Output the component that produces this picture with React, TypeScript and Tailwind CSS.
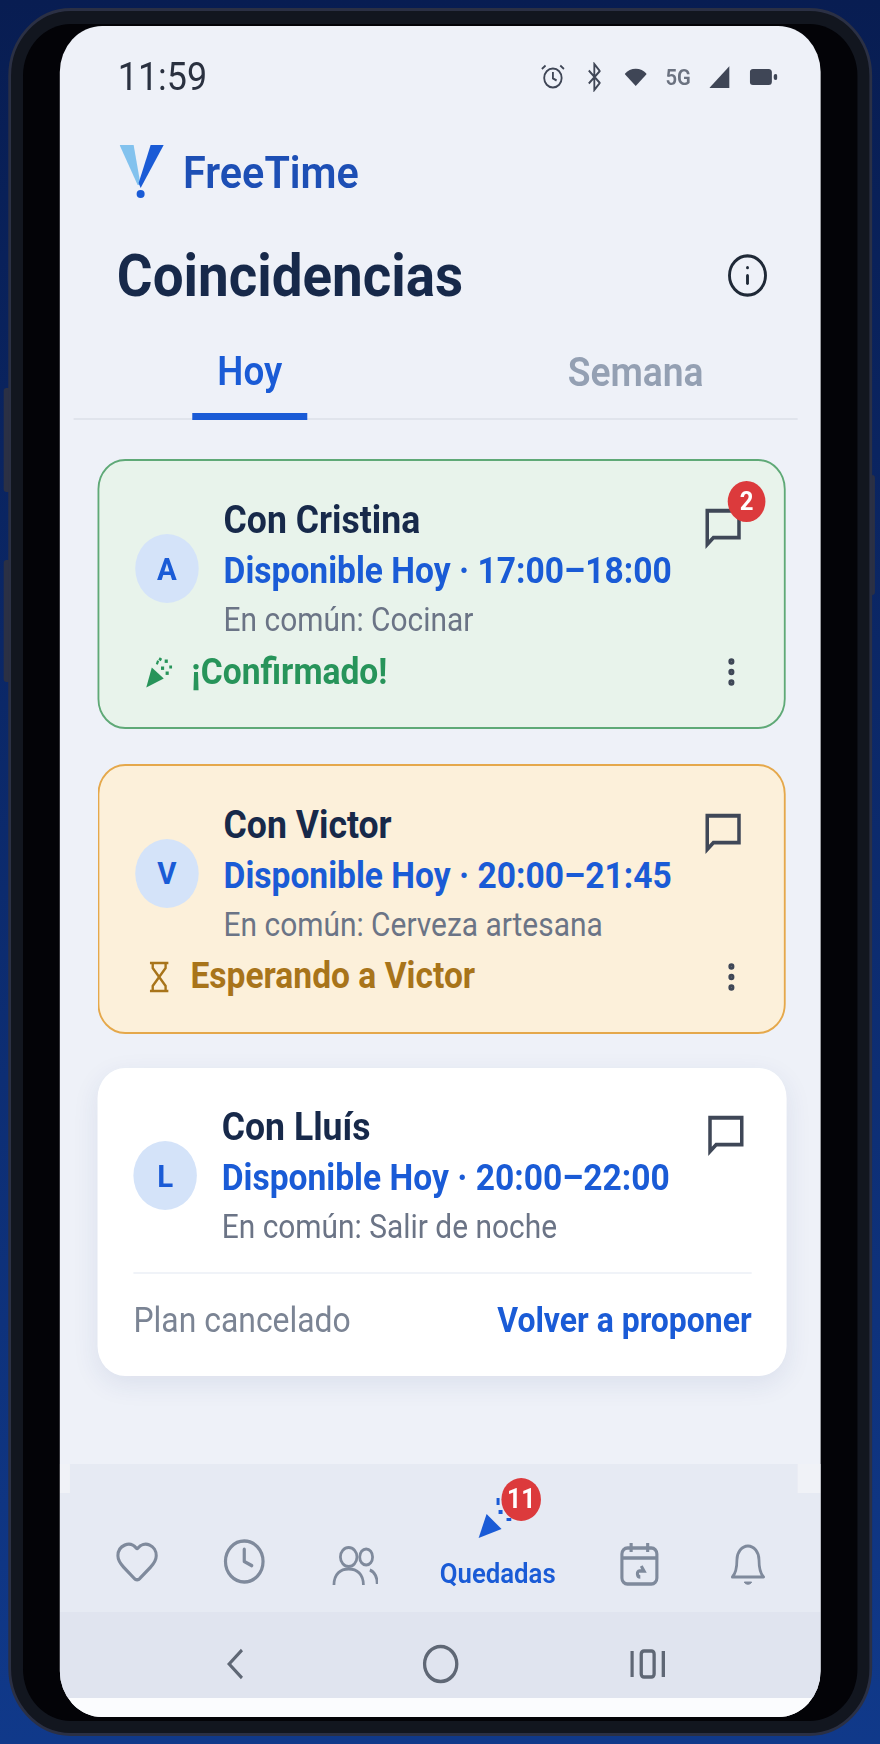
import { Clock, Heart, Info, MoreVertical } from "lucide-react";

const chatPath = "M3 3h18v14H6.5L3 20.5z";

function ChatIcon({ count }: { count?: number }) {
  return (
    <div className="relative mt-[14px] h-[40px] w-[40px] shrink-0 self-start">
      <svg viewBox="0 0 24 24" className="h-[46px] w-[46px] -translate-x-[3px] -translate-y-[3px]" fill="none" stroke="#3f4757" strokeWidth="2" preserveAspectRatio="none">
        <path d={chatPath} strokeLinejoin="miter" />
      </svg>
      {count ? (
        <span className="absolute left-[25px] top-[-27px] flex h-[41px] w-[41px] items-center justify-center rounded-full bg-[#dc3a3c] text-[26px] font-bold text-white">
          {count}
        </span>
      ) : null}
    </div>
  );
}

function Avatar({ letter }: { letter: string }) {
  return (
    <div className="flex h-[69px] w-[69px] shrink-0 items-center justify-center rounded-full bg-[#d4e3f9] text-[32px] font-bold text-[#1a5bd6]">
      {letter}
    </div>
  );
}

function MatchInfo({ name, time, common }: { name: string; time: string; common: string }) {
  return (
    <div className="flex-1">
      <p className="text-[38.7px] leading-[51px] font-bold text-[#17294a]">{name}</p>
      <p className="text-[36.5px] leading-[52px] font-bold text-[#1a5bd6]">{time}</p>
      <p className="text-[32.5px] leading-[46px] text-[#6b7486]">{common}</p>
    </div>
  );
}

function Confetti() {
  return (
    <svg viewBox="0 0 32 32" className="h-[33px] w-[32px]" fill="#27945a">
      <path d="M7 11 20 22 1 31z" />
      <rect x="15" y="1" width="3" height="3" transform="rotate(30 16 2)" />
      <rect x="12" y="4" width="2.4" height="4" transform="rotate(20 13 6)" />
      <rect x="21" y="3" width="3.4" height="3.4" />
      <rect x="17" y="10" width="3.4" height="3.4" />
      <rect x="26" y="9" width="3" height="3" />
      <rect x="22" y="15" width="3.4" height="3.4" />
    </svg>
  );
}

function Hourglass() {
  return (
    <svg viewBox="0 0 24 32" className="h-[32px] w-[24px]" fill="none" stroke="#a8741a" strokeWidth="2.6">
      <path d="M2 2h20M2 30h20M5 2v5l14 18v5M19 2v5L5 25v5" />
    </svg>
  );
}

function StatusCard({ tone, name, time, common, avatar, count, status }: {
  tone: "green" | "amber";
  name: string;
  time: string;
  common: string;
  avatar: string;
  count?: number;
  status: string;
}) {
  const green = tone === "green";
  return (
    <div className={green
      ? "h-[270px] rounded-[30px] border-2 border-[#5fa977] bg-[#e8f3eb] pt-[33px] pr-[46px] pl-[39px]"
      : "h-[270px] rounded-[30px] border-2 border-[#e5a84b] bg-[#fcf0da] pt-[33px] pr-[46px] pl-[39px]"}>
      <div className="flex items-center">
        <Avatar letter={avatar} />
        <div className="w-[27px] shrink-0" />
        <MatchInfo name={name} time={time} common={common} />
        <ChatIcon count={count} />
      </div>
      <div className="mt-[9px] -mr-[7px] flex h-[40px] items-center justify-between pl-[11px]">
        <div className="flex items-center">
          {green ? <Confetti /> : <span className="ml-[3px] mr-[5px]"><Hourglass /></span>}
          <span className={green
            ? "ml-[18px] text-[36.5px] font-bold text-[#27945a]"
            : "ml-[17px] text-[36.5px] font-bold text-[#a8741a]"}>{status}</span>
        </div>
        <MoreVertical className="h-[36px] w-[36px] text-[#3f4757]" strokeWidth={2.4} />
      </div>
    </div>
  );
}

function StatusIcons() {
  return (
    <div className="flex items-center text-[#3f4656]">
      <svg viewBox="0 0 26 26" className="h-[26px] w-[26px]" fill="none" stroke="currentColor" strokeWidth="2">
        <circle cx="13" cy="14" r="9.5" />
        <path d="M13 8v6.5l4 2M1 5l4-3.5M25 5l-4-3.5" />
      </svg>
      <svg viewBox="0 0 14 30" className="ml-[25px] h-[30px] w-[14px]" fill="none" stroke="currentColor" strokeWidth="2">
        <path d="M1 8.5 13 21 7 28V2l6 7L1 21.5" />
      </svg>
      <svg viewBox="0 0 24 18" className="ml-[26px] h-[18px] w-[24px]" fill="currentColor">
        <path d="M0 6C6-1 18-1 24 6L12 18z" />
      </svg>
      <span className="ml-[20px] text-[22px] font-semibold text-[#6b7280]">5G</span>
      <svg viewBox="0 0 22 22" className="ml-[20px] h-[22px] w-[22px]" fill="currentColor">
        <path d="M22 0v22H0z" />
      </svg>
      <svg viewBox="0 0 30 16" className="ml-[22px] h-[16px] w-[30px]" fill="currentColor">
        <rect x="0" y="0" width="24" height="16" rx="3.5" />
        <rect x="26" y="5" width="4" height="6" rx="2" />
      </svg>
    </div>
  );
}

function Logo() {
  return (
    <svg viewBox="0 0 45 54" className="h-[54px] w-[49px]" preserveAspectRatio="none">
      <path d="M0 0h14l7 40h-3z" fill="#82c2ee" />
      <path d="M31 0h13L21 43l-2-5z" fill="#1a5bd6" />
      <circle cx="21" cy="49" r="4" fill="#1a5bd6" />
    </svg>
  );
}

export default function App() {
  return (
    <div className="h-[1744px] w-[880px] overflow-hidden bg-gradient-to-b from-[#081d52] to-[#10398a] font-['Roboto',sans-serif]">
      <div className="relative h-[1744px] w-[957px] origin-top-left scale-x-[0.92] pt-[8px] pl-[9px]">
        {/* side buttons */}
        <div className="absolute left-[4px] top-[388px] h-[104px] w-[9px] rounded-l-[3px] bg-[#2b3044]" />
        <div className="absolute left-[4px] top-[560px] h-[122px] w-[9px] rounded-l-[3px] bg-[#2b3044]" />
        <div className="absolute left-[943px] top-[475px] h-[120px] w-[8px] rounded-r-[3px] bg-[#2b3044]" />

        <div className="relative h-[1728px] w-[939px] rounded-[68px] border-[3px] border-[#2b3044] bg-[#12161f] px-[13px] pt-[13px]">
          <div className="h-[1697px] rounded-[52px] bg-[#030307] px-[40px] pt-[2px]">
            <div className="flex h-[1691px] flex-col overflow-hidden rounded-[46px] bg-[#eef1f8]">
              <div className="flex h-[100px] shrink-0 items-center justify-between pt-[2px] pr-[47px] pl-[63px]">
                <span className="text-[39px] leading-none text-[#2a3140]">11:59</span>
                <StatusIcons />
              </div>

              <div className="mt-[19px] flex h-[54px] shrink-0 items-center pl-[65px]">
                <Logo />
                <span className="ml-[20px] pt-[2px] text-[45px] font-semibold text-[#1d4fb5]">FreeTime</span>
              </div>

              <div className="mt-[46px] flex h-[60px] shrink-0 items-center justify-between pr-[56px] pl-[62px]">
                <h1 className="pt-[4px] text-[59.5px] leading-none font-bold text-[#17294a]">Coincidencias</h1>
                <Info className="h-[47px] w-[47px] text-[#1f2937]" strokeWidth={1.6} />
              </div>

              <div className="mt-[43px] mr-[25px] ml-[15px] flex h-[72px] shrink-0 border-b-[2px] border-[#e0e4ec]">
                <div className="ml-[129px] h-[72px] w-[125px] border-b-[7px] border-[#1a5bd6] pt-[2px] text-center text-[40px] leading-[44px] font-semibold text-[#1a5bd6]">Hoy</div>
                <div className="ml-[283px] w-[124px] pt-[2px] text-center text-[40.5px] leading-[44px] font-semibold text-[#94a0b3]">Semana</div>
              </div>

              <div className="flex flex-1 flex-col gap-[34.5px] pt-[39px] pl-[41px]">
                <div className="w-[748px]">
                  <StatusCard tone="green" name="Con Cristina" time="Disponible Hoy · 17:00–18:00" common="En común: Cocinar" avatar="A" count={2} status="¡Confirmado!" />
                </div>
                <div className="w-[748px]">
                  <StatusCard tone="amber" name="Con Victor" time="Disponible Hoy · 20:00–21:45" common="En común: Cerveza artesana" avatar="V" status="Esperando a Victor" />
                </div>
                <div className="h-[308px] w-[749px] rounded-[30px] bg-white pt-[33px] pr-[38px] pl-[39px] shadow-[0_8px_28px_rgba(30,60,120,0.09)]">
                  <div className="flex items-center pr-[8px]">
                    <Avatar letter="L" />
                    <div className="w-[27px] shrink-0" />
                    <MatchInfo name="Con Lluís" time="Disponible Hoy · 20:00–22:00" common="En común: Salir de noche" />
                    <ChatIcon />
                  </div>
                  <div className="mt-[22px] border-t-[2px] border-[#f0f3f8] pt-[24px]">
                    <div className="flex items-center justify-between">
                      <span className="text-[34.7px] leading-[44px] text-[#7b8494]">Plan cancelado</span>
                      <span className="text-[34.7px] leading-[44px] font-bold text-[#1a5bd6]">Volver a proponer</span>
                    </div>
                  </div>
                </div>
              </div>

              <div className="h-[29px] shrink-0 bg-[#f0f2f7]">
                <div className="mr-[25px] ml-[11px] h-[29px] bg-[#e6eaf3]" />
              </div>
              <div className="grid h-[119px] shrink-0 grid-cols-[113px_120px_121px_190px_118px_118px] items-end bg-[#e6eaf3] pb-[26px] pl-[27px] text-[#7f8a9c]">
                <div className="flex justify-center"><Heart className="h-[50px] w-[52px]" strokeWidth={1.6} /></div>
                <div className="flex justify-center"><Clock className="h-[49px] w-[49px]" strokeWidth={1.7} /></div>
                <div className="flex justify-center">
                  <svg viewBox="0 0 50 40" className="h-[40px] w-[50px]" fill="none" stroke="currentColor" strokeWidth="3">
                    <ellipse cx="18" cy="11" rx="9" ry="9.5" />
                    <ellipse cx="37" cy="11" rx="7" ry="8" />
                    <path d="M2 39c0-11 7-16 16-16s16 5 16 16M41 24c5 2 8 7 8 14" />
                  </svg>
                </div>
                <div className="relative -mb-[6px] flex justify-center">
                  <span className="text-[28px] leading-[36px] font-semibold text-[#1a5bd6]">Quedadas</span>
                  <svg viewBox="0 0 36 42" className="absolute left-[71px] top-[-58px] h-[42px] w-[39px]" fill="#1a5bd6" preserveAspectRatio="none">
                    <path d="M11 16 26 31 3 40z" />
                    <rect x="21" y="0" width="3" height="7" />
                    <rect x="23" y="12" width="4" height="4" />
                    <rect x="31" y="20" width="5" height="3" />
                  </svg>
                  <span className="absolute left-[99px] top-[-78px] flex h-[43px] w-[43px] items-center justify-center rounded-full bg-[#dc3a3c] text-[27px] font-bold text-white">11</span>
                </div>
                <div className="flex justify-center">
                  <svg viewBox="0 0 44 44" className="h-[44px] w-[44px]" fill="none" stroke="currentColor" strokeWidth="3.4">
                    <rect x="3" y="6" width="38" height="36" rx="6" />
                    <path d="M3 16h38M13 1v9M31 1v9M24 24l3 5h-5c-3 0-3 6 1 6" />
                  </svg>
                </div>
                <div className="flex justify-center">
                  <svg viewBox="0 0 40 44" className="h-[44px] w-[40px]" fill="none" stroke="currentColor" strokeWidth="3">
                    <path d="M3 35c3-3 5-7 5-17a12 14 0 0 1 24 0c0 10 2 14 5 17z" strokeLinejoin="round" />
                    <path d="M16 40c1 3 7 3 8 0z" fill="currentColor" strokeWidth="1" />
                  </svg>
                </div>
              </div>

              <div className="grid h-[86px] shrink-0 grid-cols-[222px_224px_226px] items-center bg-[#e0e4ef] pt-[18px] pl-[80px] text-[#5f6775]">
                <div className="flex justify-center">
                  <svg viewBox="0 0 20 32" className="h-[32px] w-[20px]" fill="none" stroke="currentColor" strokeWidth="3.2">
                    <path d="M17 2 3 16l14 14" />
                  </svg>
                </div>
                <div className="flex justify-center">
                  <svg viewBox="0 0 40 40" className="h-[40px] w-[40px]" fill="none" stroke="currentColor" strokeWidth="3.6">
                    <circle cx="20" cy="20" r="17.5" />
                  </svg>
                </div>
                <div className="flex justify-center">
                  <svg viewBox="0 0 38 30" className="h-[30px] w-[38px]" fill="none" stroke="currentColor" strokeWidth="3.6">
                    <path d="M2 2v26M36 2v26" />
                    <rect x="12" y="2" width="14" height="26" rx="3" />
                  </svg>
                </div>
              </div>
              <div className="h-[19px] flex-none bg-[#fbfcfe]" />
            </div>
          </div>
        </div>
      </div>
    </div>
  );
}
